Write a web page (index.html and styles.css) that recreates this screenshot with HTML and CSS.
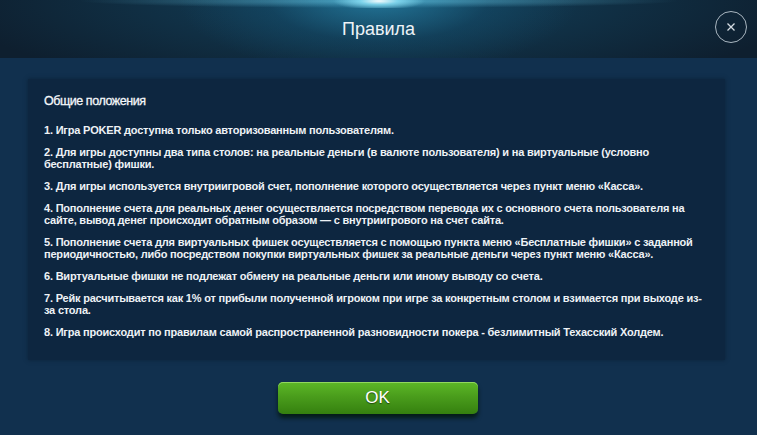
FILE: index.html
```html
<!DOCTYPE html>
<html lang="ru">
<head>
<meta charset="utf-8">
<title>Правила</title>
<link rel="stylesheet" href="styles.css">
</head>
<body>
<div class="dialog">
  <header class="dialog-head">
    <div class="glow"></div>
    <h1 class="dialog-title">Правила</h1>
    <button class="close" aria-label="Закрыть">
      <svg width="10" height="10" viewBox="0 0 10 10"><path d="M1.5 1.5 L8.5 8.5 M8.5 1.5 L1.5 8.5" stroke="#d6dde3" stroke-width="1.3" fill="none"/></svg>
    </button>
  </header>
  <main class="dialog-body">
    <section class="rules">
      <h2 class="rules-title">Общие положения</h2>
      <p>1. Игра POKER доступна только авторизованным пользователям.</p>
      <p>2. Для игры доступны два типа столов: на реальные деньги (в валюте пользователя) и на виртуальные (условно бесплатные) фишки.</p>
      <p>3. Для игры используется внутриигровой счет, пополнение которого осуществляется через пункт меню «Касса».</p>
      <p>4. Пополнение счета для реальных денег осуществляется посредством перевода их с основного счета пользователя на сайте, вывод денег происходит обратным образом — с внутриигрового на счет сайта.</p>
      <p>5. Пополнение счета для виртуальных фишек осуществляется с помощью пункта меню «Бесплатные фишки» с заданной периодичностью, либо посредством покупки виртуальных фишек за реальные деньги через пункт меню «Касса».</p>
      <p>6. Виртуальные фишки не подлежат обмену на реальные деньги или иному выводу со счета.</p>
      <p>7. Рейк расчитывается как 1% от прибыли полученной игроком при игре за конкретным столом и взимается при выходе из-за стола.</p>
      <p>8. Игра происходит по правилам самой распространенной разновидности покера - безлимитный Техасский Холдем.</p>
    </section>
    <div class="actions">
      <button class="ok">OK</button>
    </div>
  </main>
</div>
</body>
</html>
```

FILE: styles.css
```css
* { box-sizing: border-box; }

html, body {
  margin: 0;
  height: 100%;
}

body {
  background: #11304e;
  font-family: "Liberation Sans", Arial, Helvetica, sans-serif;
  color: #f2f5f8;
}

.dialog {
  width: 757px;
  height: 435px;
  display: flex;
  flex-direction: column;
  overflow: hidden;
}

.dialog-head {
  position: relative;
  height: 58px;
  flex: none;
  display: flex;
  align-items: center;
  justify-content: center;
  background:
    radial-gradient(ellipse 200px 75px at 50% 0%, rgba(45, 150, 190, 0.6), rgba(22, 90, 125, 0.3) 55%, rgba(15, 50, 75, 0) 100%),
    radial-gradient(ellipse 430px 95px at 50% 0%, rgba(20, 78, 108, 0.75), rgba(15, 40, 60, 0) 100%),
    #0e1f2f;
  overflow: hidden;
}

.glow {
  position: absolute;
  left: 50%;
  top: -6px;
  width: 600px;
  height: 14px;
  transform: translateX(-50%);
  background:
    radial-gradient(ellipse 46px 9px at 50% 50%, rgba(255, 255, 255, 0.95), rgba(150, 235, 255, 0.7) 40%, rgba(80, 200, 240, 0) 100%),
    radial-gradient(ellipse 300px 7px at 50% 50%, rgba(110, 210, 240, 0.55), rgba(60, 160, 200, 0) 100%);
}

.dialog-title {
  margin: 0;
  font-size: 18px;
  font-weight: normal;
  color: #eef3f7;
  position: relative;
}

.close {
  position: absolute;
  right: 10px;
  top: 11px;
  width: 32px;
  height: 32px;
  border-radius: 50%;
  border: 1px solid #a9b6c0;
  background: transparent;
  padding: 0;
  display: flex;
  align-items: center;
  justify-content: center;
}

.dialog-body {
  flex: 1;
  display: flex;
  flex-direction: column;
  padding: 21px 32px 0 28px;
}

.rules {
  background: #0d2640;
  box-shadow: 0 0 4px rgba(6, 20, 36, 0.5);
  height: 281px;
  padding: 15px 14px 0 16px;
}

.rules-title {
  margin: 0 0 15px;
  font-size: 12.5px;
  font-weight: normal;
  letter-spacing: -0.45px;
  line-height: 15px;
  color: #f4f7fa;
  -webkit-text-stroke: 0.3px #f4f7fa;
}

.rules p {
  margin: 0 0 10px;
  font-size: 11px;
  line-height: 12px;
  font-weight: bold;
  letter-spacing: -0.2px;
  color: #eef2f6;
}

.actions {
  display: flex;
  justify-content: center;
  padding-top: 22px;
  padding-left: 2px;
}

.ok {
  width: 200px;
  height: 32px;
  border: none;
  border-radius: 5px;
  background: linear-gradient(#5db827 0%, #4a9d1c 45%, #35800f 100%);
  box-shadow: inset 0 1px 0 rgba(170, 230, 120, 0.7), 0 4px 4px rgba(2, 20, 6, 0.75);
  color: #ffffff;
  font-family: "Liberation Sans", Arial, sans-serif;
  font-size: 17px;
  text-shadow: 0 1px 1px rgba(0, 0, 0, 0.5);
  padding: 0;
}
```
